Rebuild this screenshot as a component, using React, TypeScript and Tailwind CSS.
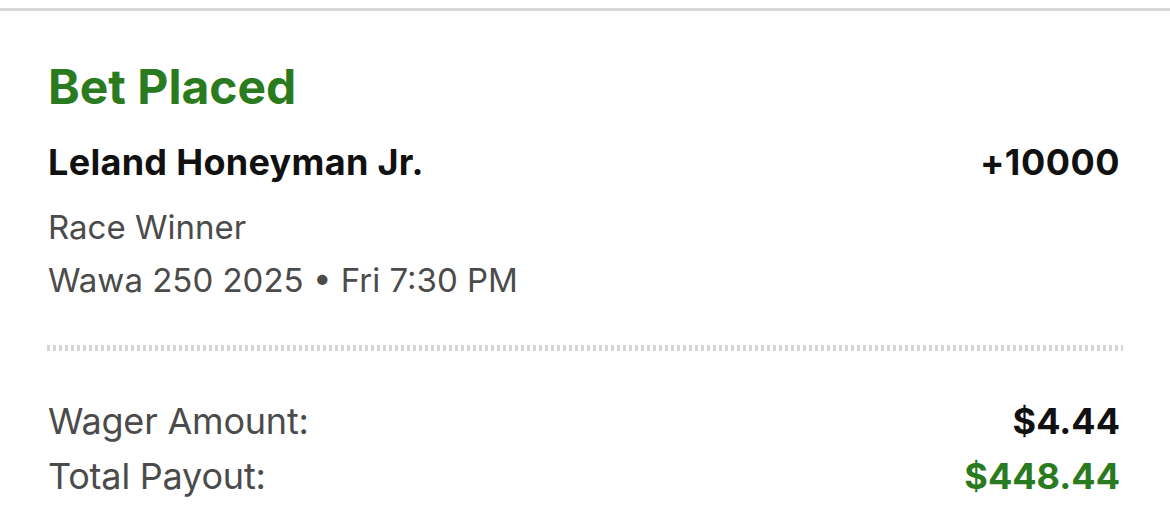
const green = "text-[#2a7b20]";

function Row({ label, value, valueClass }: { label: string; value: string; valueClass: string }) {
	return (
		<div className="flex items-baseline justify-between">
			<span className="text-[36px] leading-[36px] tracking-[-0.2px] text-[#4b4b4b]">{label}</span>
			<span className={`text-[36px] leading-[36px] font-bold ${valueClass}`}>{value}</span>
		</div>
	);
}

export default function App() {
	return (
		<div className="min-h-screen w-full bg-white pt-[8px] font-['Inter',sans-serif] antialiased">
			<div className="h-[3px] w-full bg-[#d8d8d8]" />
			<div className="pl-[48px] pr-[50px]">
				<h1 className={`mt-[52px] text-[48px] leading-[48px] font-bold ${green}`}>Bet Placed</h1>

				<div className="mt-[33px] flex items-baseline justify-between">
					<span className="text-[36px] leading-[36px] font-bold tracking-[0.3px] text-[#111]">
						Leland Honeyman Jr.
					</span>
					<span className="text-[36px] leading-[36px] font-bold tracking-[0.5px] text-[#111]">+10000</span>
				</div>

				<div className="mt-[31px] text-[33px] leading-[33px] text-[#4b4b4b]">Race Winner</div>
				<div className="mt-[20px] text-[33px] leading-[33px] text-[#4b4b4b]">
					Wawa 250 2025 • Fri 7:30 PM
				</div>

				{/* dotted divider */}
				<div className="-ml-px mr-[-3px] mt-[48px] h-[6px] bg-[repeating-linear-gradient(90deg,#d6d6d6_0px,#d6d6d6_3px,transparent_3px,transparent_6px)]" />

				<div className="mt-[52px] flex flex-col gap-[19px]">
					<Row label="Wager Amount:" value="$4.44" valueClass="text-[#111]" />
					<Row label="Total Payout:" value="$448.44" valueClass={green} />
				</div>
			</div>
		</div>
	);
}
